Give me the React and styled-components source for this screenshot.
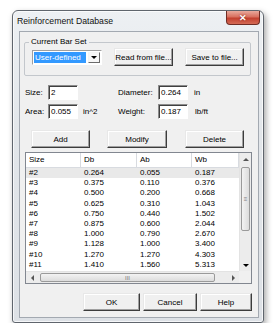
import React from "react";
import styled, { createGlobalStyle } from "styled-components";

const GlobalStyle = createGlobalStyle`
  html, body {
    margin: 0;
    padding: 0;
    background: #ffffff;
  }
  body {
    font-family: "Liberation Sans", Arial, sans-serif;
    font-size: 8px;
    color: #000;
  }
`;

const Page = styled.div`
  padding: 10px 0 0 12px;
`;

const Window = styled.div`
  width: 252px;
  height: 313px;
  box-sizing: border-box;
  border: 1px solid #5f656d;
  border-radius: 6px 6px 3px 3px;
  background: linear-gradient(to bottom, #edf0f3 0%, #e2e6ea 40%, #dde1e6 100%);
  box-shadow: 2px 3px 6px rgba(0, 0, 0, 0.35), inset 0 0 0 1px rgba(255, 255, 255, 0.7);
  display: flex;
  flex-direction: column;
`;

const TitleBar = styled.div`
  height: 20px;
  display: flex;
  align-items: flex-start;
  justify-content: space-between;
`;

const Title = styled.span`
  font-size: 8.7px;
  line-height: 20px;
  padding-left: 4px;
  color: #111;
`;

const CloseButton = styled.div`
  width: 34px;
  height: 14px;
  margin-right: 3px;
  box-sizing: border-box;
  border: 1px solid #6f2c24;
  border-top: none;
  border-radius: 0 0 4px 4px;
  background: linear-gradient(to bottom, #e9a99c 0%, #d8705f 45%, #c2402f 55%, #d46a55 100%);
  color: #fff;
  font-size: 9px;
  font-weight: bold;
  display: flex;
  align-items: center;
  justify-content: center;
  text-shadow: 0 0 2px #7a1c10;
`;

const Client = styled.div`
  flex: 1;
  margin: 0 4px 4px 6px;
  background: #f0f0f0;
  border: 1px solid #a3a9b1;
  display: flex;
  flex-direction: column;
`;

const Group = styled.fieldset`
  margin: 5px 0 0 4px;
  width: 227px;
  box-sizing: border-box;
  border: 1px solid #c3c7cc;
  border-radius: 2px;
  padding: 1px 6px 9px 7px;
  min-width: 0;
`;

const Legend = styled.legend`
  margin-left: -3px;
  padding: 0 2px;
  font-size: 8px;
  line-height: 10px;
`;

const BarSetRow = styled.div`
  display: flex;
  align-items: center;
  height: 18px;
`;

const Combo = styled.div`
  width: 70px;
  height: 15px;
  box-sizing: border-box;
  border: 1px solid;
  border-color: #a0a0a0 #ffffff #ffffff #a0a0a0;
  background: #fff;
  display: flex;
  padding: 1px;
  gap: 2px;
`;

const Selection = styled.div`
  flex: 1;
  background: #3399ff;
  color: #fff;
  line-height: 11px;
  padding-left: 1px;
  white-space: nowrap;
  overflow: hidden;
`;

const ArrowButton = styled.div`
  width: 12px;
  box-sizing: border-box;
  border: 1px solid;
  border-color: #f4f4f4 #6b6b6b #6b6b6b #f4f4f4;
  background: #f7f7f7;
  display: flex;
  align-items: center;
  justify-content: center;
`;

const Triangle = styled.span`
  width: 0;
  height: 0;
  border-style: solid;
  border-color: transparent;
  ${({ $dir }) =>
    $dir === "down"
      ? "border-width: 3px 3px 0 3px; border-top-color: #000;"
      : $dir === "up"
      ? "border-width: 0 3px 3px 3px; border-bottom-color: #555;"
      : $dir === "left"
      ? "border-width: 3px 3px 3px 0; border-right-color: #555;"
      : "border-width: 3px 0 3px 3px; border-left-color: #555;"}
`;

const Button = styled.button`
  width: ${({ $w }) => $w}px;
  height: 18px;
  margin-left: ${({ $ml }) => $ml || 0}px;
  padding: 0;
  box-sizing: border-box;
  font-family: "Liberation Sans", Arial, sans-serif;
  font-size: 8px;
  color: #000;
  background: #f0f0f0;
  border: 1px solid;
  border-color: #e8e8e8 #3c3c3c #3c3c3c #e8e8e8;
  box-shadow: inset -1px -1px #a0a0a0, inset 1px 1px #ffffff;
  white-space: nowrap;
`;

const FieldGrid = styled.div`
  display: grid;
  grid-template-columns: 23px 30px 40px 40px 30px auto;
  grid-auto-rows: 15px;
  row-gap: 4px;
  margin: 9px 0 0 5px;
  align-items: center;
`;

const Label = styled.span`
  line-height: 15px;
`;

const Unit = styled.span`
  padding-left: ${({ $pl }) => $pl}px;
`;

const TextBox = styled.div`
  height: 15px;
  box-sizing: border-box;
  border: 1px solid;
  border-color: #8c8c8c #ffffff #ffffff #8c8c8c;
  box-shadow: inset 1px 1px #404040;
  background: #fff;
  padding-left: 2px;
  line-height: 13px;
`;

const ButtonRow = styled.div`
  display: flex;
  margin: 11px 0 0 11px;
`;

const List = styled.div`
  margin: 4px 0 0 5px;
  width: 227px;
  height: 132px;
  box-sizing: border-box;
  border: 1px solid #828790;
  background: #fff;
  display: grid;
  grid-template-columns: 1fr 12px;
  grid-template-rows: 1fr 12px;
`;

const ListBody = styled.div`
  overflow: hidden;
`;

const Cols = styled.div`
  display: grid;
  grid-template-columns: 55px 56px 55px 1fr;
  height: ${({ $h }) => $h}px;
  background: ${({ $sel }) => ($sel ? "#e9e9e9" : "transparent")};
  align-items: center;
`;

const HeaderRow = styled(Cols)`
  border-bottom: 1px solid #d8dbe0;
`;

const HeadCell = styled.div`
  height: 100%;
  line-height: 13px;
  padding-left: 3px;
  border-right: 1px solid #d8dbe0;
`;

const Cell = styled.div`
  padding-left: 3px;
  line-height: 10.2px;
`;

const VScroll = styled.div`
  background: #ececec;
  border-left: 1px solid #e3e3e3;
  display: flex;
  flex-direction: column;
`;

const HScroll = styled.div`
  background: #ececec;
  border-top: 1px solid #e3e3e3;
  display: flex;
`;

const Corner = styled.div`
  background: #f0f0f0;
`;

const ScrollArrow = styled.div`
  flex: 0 0 12px;
  display: flex;
  align-items: center;
  justify-content: center;
`;

const Track = styled.div`
  flex: 1;
  display: flex;
  flex-direction: ${({ $vertical }) => ($vertical ? "column" : "row")};
`;

const Thumb = styled.div`
  ${({ $vertical }) =>
    $vertical
      ? "margin: 2px 1px 0 1px; height: 64px; background: linear-gradient(to right, #f3f3f3, #dcdcdc);"
      : "margin: 1px 0 1px 2px; width: 175px; background: linear-gradient(to bottom, #f3f3f3, #dcdcdc);"}
  border: 1px solid #9a9a9a;
  border-radius: 2px;
  box-sizing: border-box;
  display: flex;
  align-items: center;
  justify-content: center;
  color: #7a7a7a;
  font-size: 6px;
  line-height: 6px;
`;

const BottomRow = styled.div`
  display: flex;
  justify-content: flex-end;
  margin: 9px 6px 0 0;
  gap: 3px;
`;

const rows = [
  ["#2", "0.264", "0.055", "0.187"],
  ["#3", "0.375", "0.110", "0.376"],
  ["#4", "0.500", "0.200", "0.668"],
  ["#5", "0.625", "0.310", "1.043"],
  ["#6", "0.750", "0.440", "1.502"],
  ["#7", "0.875", "0.600", "2.044"],
  ["#8", "1.000", "0.790", "2.670"],
  ["#9", "1.128", "1.000", "3.400"],
  ["#10", "1.270", "1.270", "4.303"],
  ["#11", "1.410", "1.560", "5.313"],
];

export default function App() {
  return (
    <Page>
      <GlobalStyle />
      <Window>
        <TitleBar>
          <Title>Reinforcement Database</Title>
          <CloseButton>✕</CloseButton>
        </TitleBar>
        <Client>
          <Group>
            <Legend>Current Bar Set</Legend>
            <BarSetRow>
              <Combo>
                <Selection>User-defined</Selection>
                <ArrowButton>
                  <Triangle $dir="down" />
                </ArrowButton>
              </Combo>
              <Button $w={60} $ml={12}>Read from file...</Button>
              <Button $w={59} $ml={12}>Save to file...</Button>
            </BarSetRow>
          </Group>

          <FieldGrid>
            <Label>Size:</Label>
            <TextBox>2</TextBox>
            <span />
            <Label>Diameter:</Label>
            <TextBox>0.264</TextBox>
            <Unit $pl={6}>in</Unit>
            <Label>Area:</Label>
            <TextBox>0.055</TextBox>
            <Unit $pl={5}>in^2</Unit>
            <Label>Weight:</Label>
            <TextBox>0.187</TextBox>
            <Unit $pl={7}>lb/ft</Unit>
          </FieldGrid>

          <ButtonRow>
            <Button $w={59}>Add</Button>
            <Button $w={60} $ml={17}>Modify</Button>
            <Button $w={59} $ml={18}>Delete</Button>
          </ButtonRow>

          <List>
            <ListBody>
              <HeaderRow $h={14}>
                <HeadCell>Size</HeadCell>
                <HeadCell>Db</HeadCell>
                <HeadCell>Ab</HeadCell>
                <HeadCell>Wb</HeadCell>
              </HeaderRow>
              {rows.map((r, i) => (
                <Cols key={r[0]} $h={10.2} $sel={i === 0}>
                  {r.map((c, j) => (
                    <Cell key={j}>{c}</Cell>
                  ))}
                </Cols>
              ))}
            </ListBody>
            <VScroll>
              <ScrollArrow>
                <Triangle $dir="up" />
              </ScrollArrow>
              <Track $vertical>
                <Thumb $vertical>≡</Thumb>
              </Track>
              <ScrollArrow>
                <Triangle $dir="down" />
              </ScrollArrow>
            </VScroll>
            <HScroll>
              <ScrollArrow>
                <Triangle $dir="left" />
              </ScrollArrow>
              <Track>
                <Thumb>III</Thumb>
              </Track>
              <ScrollArrow>
                <Triangle $dir="right" />
              </ScrollArrow>
            </HScroll>
            <Corner />
          </List>

          <BottomRow>
            <Button $w={57}>OK</Button>
            <Button $w={54}>Cancel</Button>
            <Button $w={52}>Help</Button>
          </BottomRow>
        </Client>
      </Window>
    </Page>
  );
}
